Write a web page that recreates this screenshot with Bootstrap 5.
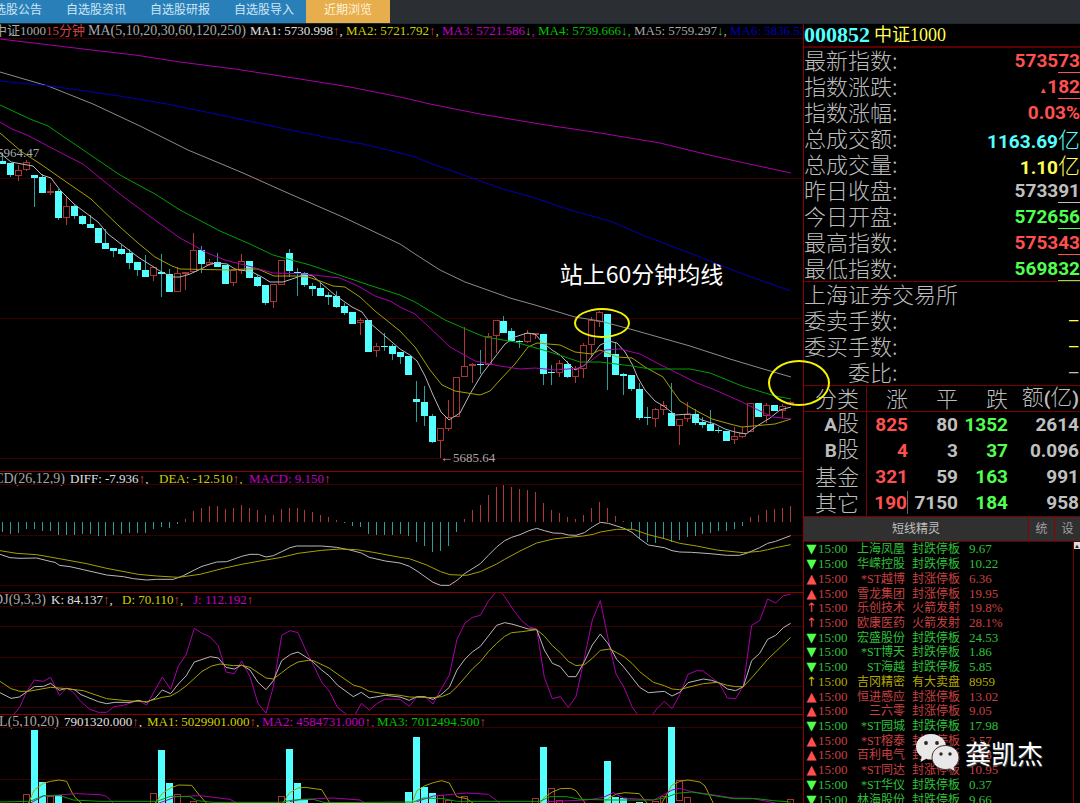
<!DOCTYPE html>
<html lang="zh-CN">
<head>
<meta charset="utf-8">
<meta name="viewport" content="width=device-width, initial-scale=1">
<title>中证1000 15分钟</title>
<link href="https://cdn.jsdelivr.net/npm/bootstrap@5.3.0/dist/css/bootstrap.min.css" rel="stylesheet">
<style>
:root{--up:#ff5050;--down:#50ff50;--cy:#54ffff;--ye:#ffff50;--gr:#c0c0c0;--rule:#780000}
body{background:#000;color:var(--gr);font-family:"Liberation Serif","Noto Sans CJK SC",serif;font-size:13px;line-height:14px}
.topnav{background:#2b2e33;height:24px;border-bottom:1px solid #1c2a35}
.topnav .nav-link{width:84px;height:23px;padding:0;font-size:12px;line-height:21px;text-align:center;white-space:nowrap;color:#cfe6f5;background:#2980b9;border-radius:0}
.topnav .nav-link.active{background:#e6ae4c;color:#fff2d8}
.topnav li:first-child{margin-left:-30px}
.charts{min-width:0;z-index:2}
.pane{overflow:hidden;border-top:1px solid #8c0000}
.pane:first-child{border-top:0}
.legend{display:grid;height:14px;white-space:nowrap;line-height:14px}
.legend .head{display:flex;justify-content:flex-end;padding-right:5px;color:#a8a8a8;min-width:0}
.legend .head,.legend .params{font-size:14px}
.legend i{font-style:normal}
.lg-price{grid-template-columns:46px 42px 162px repeat(5,96px) 73px;overflow:hidden}
.lg-price .head{padding-right:0;font-size:13px}
.lg-macd{grid-template-columns:70px 89px 90px auto}
.lg-kdj{grid-template-columns:51px 71px 71px auto}
.lg-vol{grid-template-columns:64px 83px 115px 115px auto}
.t-up{color:var(--up)}.t-dn{color:var(--down)}.t-cy{color:var(--cy)}.t-ye{color:var(--ye)}
.l-w{color:#e0e0e0}.l-y{color:#cfcf00}.l-m{color:#c000c0}.l-g{color:#00c000}.l-s{color:#a8a8a8}.l-b{color:#0000b8}.l-r{color:#d04040}
.a-u{color:#d04848}.a-d{color:#48b848}
.plot{position:relative}
.plot svg{display:block;width:100%;overflow:visible}
.p-price svg{height:433px}.p-macd svg{height:106px}.p-kdj svg{height:107px}.p-vol svg{height:74px}
.plot line,.plot polyline,.plot rect{vector-effect:non-scaling-stroke;fill:none;stroke-width:1}
.plot .grid{stroke:#380000;shape-rendering:crispEdges}
.plot .dn{fill:#54ffff;stroke:none;shape-rendering:crispEdges}
.plot .up{fill:#000;stroke:#a83434;shape-rendering:crispEdges}
.plot .wd{stroke:#2c9c9c;shape-rendering:crispEdges}
.plot .wu{stroke:#b03838;shape-rendering:crispEdges}
.s-w{stroke:#b8b8b8}.s-s{stroke:#8c8c8c}.s-y{stroke:#a8a000}.s-m{stroke:#a800a8}.s-g{stroke:#00a000}.s-b{stroke:#0000b4}
.tip{position:absolute;white-space:nowrap;color:#a8a8a8}
.tip-high{left:-3px;top:108px}
.tip-low{left:54.8%;top:413px}
.note{left:69.7%;top:220px;font:23px/30px "Noto Sans CJK SC",sans-serif;color:#fff}
.ring{position:absolute;border:2px solid #f4f400;border-radius:50%}
.ring-a{left:71.5%;top:270px;width:56px;height:30px}
.ring-b{right:-27px;top:336px;width:62px;height:46px}
.side{flex:0 0 277px;border-left:1px solid #8c0000;overflow:hidden}
.code{height:24px;border-bottom:2px solid #5c0000;line-height:24px;gap:4px}
.code strong{font-size:22px}
.code span{font-size:18px}
.quote{box-shadow:inset 0 -1px var(--rule);margin:0}
.quote>div{height:26px;line-height:22px}
.quote dt,.board th{font-family:"Noto Sans CJK SC",sans-serif;font-weight:300;font-size:22px;white-space:nowrap;color:#bcbcbc}
.quote dt.inset{padding-left:44px}
.quote dd,.board td{margin:0;font:700 19px/26px Roboto,"Liberation Sans",sans-serif;white-space:nowrap}
.quote dd em{font-style:normal;border-bottom:1px solid}
.quote dd span{font:300 22px/24px "Noto Sans CJK SC",sans-serif}
.quote dd small{font-size:8px}
.board{width:276px;table-layout:fixed;border-collapse:separate;border-spacing:0;text-align:right}
.board th,.board td{padding:0 1px 0 0;height:26px;line-height:20px;vertical-align:middle}
.board th{padding-bottom:4px;line-height:14px}
.board thead th{height:26px;border-bottom:1px solid var(--rule)}
.board th:first-child{border-right:1px solid var(--rule);padding-right:7px}
.board abbr{font:700 19px/14px Roboto,sans-serif;text-decoration:none}
.board .tick{border-right:1px solid #666}
.feedbar{height:26px;background:#303030;border-top:1px solid var(--rule);border-bottom:1px solid #600000;font-size:12px}
.feedbar button{width:26px;border:0;border-left:1px solid #8c0000;background:none;color:#a0a0a0;padding:0}
.feed{display:grid;grid-template-rows:repeat(18,1fr);height:265px;margin:0;padding:0;list-style:none;border-right:1px solid var(--rule);flex:1;font-size:13px;white-space:nowrap}
.feed li{display:grid;grid-template-columns:13px 31px 56px 7px 57px auto;align-items:center;padding-left:1px;color:#c84040}
.feed span{font-size:12px;text-align:right}
.feed .msg{grid-column:5;text-align:left}
.feed .d{color:#2fc03a}.feed .y{color:#b4a800}
.feed b{text-align:center;font:13px/12px "DejaVu Sans",sans-serif;color:var(--up)}
.feed .d b{color:var(--down)}.feed .y b{color:#c8bc00}
.sbar{width:6px;flex:none}
.sbar button{display:block;width:6px;height:7px;border:0;padding:0;background:#ddd;color:#222;font-size:6px;line-height:6px;overflow:hidden}
.wmark{position:absolute;right:37px;bottom:31px;gap:5px;font:26px/36px "Noto Sans CJK SC",sans-serif;color:#fff;text-shadow:1px 1px 1px #555;z-index:3}
</style>
</head>
<body>
<div class="vh-100 d-flex flex-column overflow-hidden position-relative">
<nav class="topnav flex-shrink-0 overflow-hidden" aria-label="自选股">
<ul class="nav flex-nowrap">
<li class="nav-item"><a class="nav-link" href="#">自选股公告</a></li>
<li class="nav-item"><a class="nav-link" href="#">自选股资讯</a></li>
<li class="nav-item"><a class="nav-link" href="#">自选股研报</a></li>
<li class="nav-item"><a class="nav-link" href="#">自选股导入</a></li>
<li class="nav-item"><a class="nav-link active" href="#" aria-current="page">近期浏览</a></li>
</ul>
</nav>
<div class="d-flex flex-fill">
<main class="charts flex-fill position-relative">
<section class="pane">
<div class="legend lg-price"><div class="head">中证1000</div><div class="l-r">15分钟</div><div class="l-s params">MA(5,10,20,30,60,120,250)</div>
<div class="l-w">MA1: 5730.998<i class="a-u">↑</i>,</div><div class="l-y">MA2: 5721.792<i class="a-u">↑</i>,</div><div class="l-m">MA3: 5721.586<i class="a-d">↓</i>,</div><div class="l-g">MA4: 5739.666<i class="a-d">↓</i>,</div><div class="l-s">MA5: 5759.297<i class="a-d">↓</i>,</div><div class="l-b overflow-hidden">MA6: 5836.53</div></div>
<div class="plot p-price"><svg id="price" viewBox="0 38 803 433" preserveAspectRatio="none"></svg>
<span class="tip tip-high">5964.47</span><span class="tip tip-low">←5685.64</span><span class="tip note">站上60分钟均线</span><div class="ring ring-a"></div></div>
</section>
<section class="pane">
<div class="legend lg-macd"><div class="head">MACD(26,12,9)</div><div class="l-w">DIFF: -7.936<i class="a-u">↑</i>,</div><div class="l-y">DEA: -12.510<i class="a-u">↑</i>,</div><div class="l-m">MACD: 9.150<i class="a-u">↑</i></div></div>
<div class="plot p-macd"><svg id="macd" viewBox="0 63 2409 318" preserveAspectRatio="none"></svg></div>
</section>
<section class="pane">
<div class="legend lg-kdj"><div class="head">KDJ(9,3,3)</div><div class="l-w">K: 84.137<i class="a-u">↑</i>,</div><div class="l-y">D: 70.110<i class="a-u">↑</i>,</div><div class="l-m">J: 112.192<i class="a-u">↑</i></div></div>
<div class="plot p-kdj"><svg id="kdj" viewBox="0 51 2409 321" preserveAspectRatio="none"></svg></div>
</section>
<section class="pane">
<div class="legend lg-vol"><div class="head">VOL(5,10,20)</div><div class="l-w">7901320.000<i class="a-u">↑</i>,</div><div class="l-y">MA1: 5029901.000<i class="a-u">↑</i>,</div><div class="l-m">MA2: 4584731.000<i class="a-u">↑</i>,</div><div class="l-g">MA3: 7012494.500<i class="a-u">↑</i></div></div>
<div class="plot p-vol"><svg id="vol" viewBox="0 417 2409 222" preserveAspectRatio="none"></svg></div>
</section>
<div class="ring ring-b"></div>
</main>
<aside class="side">
<div class="code d-flex align-items-center"><strong class="t-cy">000852</strong><span class="t-ye">中证1000</span></div>
<dl class="quote">
<div class="d-flex justify-content-between"><dt>最新指数:</dt><dd class="t-up">5735<em>73</em></dd></div>
<div class="d-flex justify-content-between"><dt>指数涨跌:</dt><dd class="t-up"><small>▲</small>1<em>82</em></dd></div>
<div class="d-flex justify-content-between"><dt>指数涨幅:</dt><dd class="t-up">0.03%</dd></div>
<div class="d-flex justify-content-between"><dt>总成交额:</dt><dd class="t-cy">1163.69<span>亿</span></dd></div>
<div class="d-flex justify-content-between"><dt>总成交量:</dt><dd class="t-ye">1.10<span>亿</span></dd></div>
<div class="d-flex justify-content-between"><dt>昨日收盘:</dt><dd>5733<em>91</em></dd></div>
<div class="d-flex justify-content-between"><dt>今日开盘:</dt><dd class="t-dn">5726<em>56</em></dd></div>
<div class="d-flex justify-content-between"><dt>最高指数:</dt><dd class="t-up">5753<em>43</em></dd></div>
<div class="d-flex justify-content-between"><dt>最低指数:</dt><dd class="t-dn">5698<em>32</em></dd></div>
</dl>
<dl class="quote">
<div class="d-flex justify-content-between"><dt>上海证券交易所</dt></div>
<div class="d-flex justify-content-between"><dt>委卖手数:</dt><dd class="t-ye fw-normal">–</dd></div>
<div class="d-flex justify-content-between"><dt>委买手数:</dt><dd class="t-ye fw-normal">–</dd></div>
<div class="d-flex justify-content-between"><dt class="inset">委比:</dt><dd class="fw-normal">–</dd></div>
</dl>
<table class="board">
<colgroup><col style="width:63px"><col style="width:42px"><col style="width:50px"><col style="width:50px"><col></colgroup>
<thead><tr><th>分类</th><th>涨</th><th>平</th><th>跌</th><th>额<abbr>(</abbr>亿<abbr>)</abbr></th></tr></thead>
<tbody>
<tr><th><abbr>A</abbr>股</th><td class="t-up">825</td><td>80</td><td class="t-dn">1352</td><td>2614</td></tr>
<tr><th><abbr>B</abbr>股</th><td class="t-up">4</td><td>3</td><td class="t-dn">37</td><td>0.096</td></tr>
<tr><th>基金</th><td class="t-up">321</td><td>59</td><td class="t-dn">163</td><td>991</td></tr>
<tr><th>其它</th><td class="t-up"><span class="tick">190</span></td><td>7150</td><td class="t-dn">184</td><td>958</td></tr>
</tbody>
</table>
<div class="feedbar d-flex align-items-stretch"><div class="flex-fill text-center align-self-center">短线精灵</div><button type="button">统</button><button type="button">设</button></div>
<div class="d-flex"><ul class="feed" id="feed"></ul><div class="sbar"><button type="button" aria-label="上">▲</button></div></div>
</aside>
</div>
<div class="wmark d-flex align-items-center">
<svg width="44" height="38" viewBox="0 0 44 38" aria-hidden="true"><g fill="#e8e8e8"><path d="M15 0C6.700 0 0 5.600 0 12.700c0 4.100 2.200 7.700 5.700 10L4.500 28l5.600-3.200c1.600.4 3.200.6 4.900.6 8.300 0 15-5.600 15-12.700S23.300 0 15 0z"/><path d="M29.500 11.500C21.800 11.500 16 16.700 16 23.500s5.800 12 13.500 12c1.500 0 3-.2 4.400-.6l5.600 2.900-1.500-4.600c3.200-2.200 5-5.700 5-9.700 0-6.800-5.800-12-13.500-12z" stroke="#433" stroke-width="1"/></g><g fill="#322"><circle cx="10" cy="9" r="1.900"/><circle cx="21" cy="9" r="1.900"/><circle cx="25" cy="20" r="1.700"/><circle cx="34" cy="20" r="1.700"/></g></svg>
<span>龚凯杰</span></div>
</div>
<script src="https://cdn.jsdelivr.net/npm/bootstrap@5.3.0/dist/js/bootstrap.bundle.min.js"></script>
<script>
const grid=(w,ys)=>ys.map(y=>`<line class="grid" x1="0" x2="${w}" y1="${y}" y2="${y}"/>`).join('');
const path=(cls,pts)=>`<polyline class="s-${cls}" points="${pts}"/>`;
const put=(id,html)=>document.getElementById(id).innerHTML=html;

// Candles: direction, body top, body bottom, high, low
const candles=`c161,164,153,164 c163,175,163,177 r170,176,165,181 r162,170,160,171 c175,178,175,207 c177,193,174,193 r191,193,183,195 c191,218,189,220 r206,218,197,225 c206,216,205,219 c216,224,215,225 c224,228,215,228 c228,243,228,243 c243,249,229,249 c248,251,248,257 c249,254,245,255 c253,263,249,269 c262,270,262,276 c270,277,255,277 r267,276,266,281 c272,274,254,297 c274,292,269,292 r273,292,267,292 r272,273,272,290 r250,272,233,273 c250,264,246,273 r262,265,259,266 c262,267,253,267 c265,284,265,284 r270,283,270,286 r261,271,254,274 c261,278,261,278 c277,286,275,287 c285,303,285,305 r284,302,284,308 r260,285,260,285 c253,271,249,277 c272,273,268,296 c273,285,272,287 c286,289,283,296 c288,296,283,296 c295,297,292,305 c296,307,291,308 c306,313,303,315 c312,324,312,324 r320,323,318,335 c320,352,320,352 r346,351,343,357 c346,347,333,351 c346,354,344,360 c352,357,352,364 c356,375,356,375 c399,402,381,422 c402,416,386,426 c416,442,414,443 r428,441,428,458 r417,429,400,431 r377,417,377,417 r366,377,327,377 r364,365,363,383 c364,365,350,374 r336,365,333,365 r320,336,320,353 c321,333,316,333 c331,341,328,341 c341,342,340,348 r333,342,330,343 r333,334,333,339 c334,374,334,385 c372,373,365,385 r363,373,360,377 c364,377,361,378 r368,377,366,383 r345,369,343,378 r320,345,317,357 r312,322,311,327 c314,357,314,390 c354,375,342,375 c374,376,373,395 c375,389,375,391 c389,418,383,420 c417,418,407,425 r409,419,408,427 r405,410,401,415 c413,426,383,426 r419,426,419,445 r414,419,402,422 c414,423,409,425 c422,425,417,428 c424,431,410,431 c430,431,427,433 c431,441,431,441 r436,440,427,444 r433,437,427,438 r403,432,403,432 c403,417,403,417 r405,416,403,423 c405,411,405,411 r406,411,404,418 r402,403,401,403`.split(' ');
let h=grid(803,[38,178.5,318.5,458.5]);
candles.forEach((c,i)=>{const up=c[0]==='r',[t,b,hi,lo]=c.slice(1).split(',').map(Number),x=Math.round(3+i*7.96)-.5;
h+=`<line class="${up?'wu':'wd'}" x1="${x}" x2="${x}" y1="${hi}" y2="${lo}"/>`;
h+=up?`<rect class="up" x="${x-3}" y="${t+.5}" width="6" height="${Math.max(b-t-1,.5)}"/>`:`<rect class="dn" x="${x-3.5}" y="${t}" width="7" height="${b-t}"/>`;});
h+=path('w','0,153 11,162 33,166 42,175 51,178 60,190 74,204 98,222 108,234 138,257 160,271 172,277 180,277 190,274 203,268 210,264 217,263 227,264 235,269 252,272 262,277 270,282 283,282 295,278 305,274 313,276 322,284 335,295 352,307 362,312 370,323 385,336 400,349 410,355 417,361 425,376 433,395 441,412 449,420 460,413 470,394 482,374 495,357 505,344 515,337 527,333 535,334 542,342 552,350 560,355 567,362 575,370 585,365 592,356 600,345 609,341 617,343 625,352 632,364 638,378 645,390 655,401 665,407 675,415 690,414 702,420 715,424 725,429 735,432 746,434 757,426 770,418 780,410 791,407')
+path('y','0,133 22,152 42,165 62,179 91,199 120,227 138,243 155,257 172,266 180,269 230,270 245,269 258,269 274,276 295,276 308,277 320,281 333,286 345,287 360,297 375,311 400,331 415,347 430,370 442,385 455,391 480,395 490,391 500,380 515,364 528,347 537,343 560,345 575,352 592,354 600,350 610,354 617,357 632,358 645,367 663,377 672,390 680,401 695,410 712,419 730,424 742,427 775,424 791,419')
+path('m','0,122 12,129 27,135 65,155 83,164 100,178 125,198 155,220 180,238 195,246 205,252 225,260 252,267 273,273 305,274 340,278 358,286 375,296 390,301 400,307 415,314 430,328 450,347 475,361 500,366 520,369 535,368 555,370 580,368 592,360 605,350 620,349 640,354 655,362 677,373 697,383 715,390 740,401 760,411 773,417 791,419')
+path('g','0,105 30,119 48,126 70,141 95,158 120,175 155,194 180,210 220,231 250,244 273,255 310,265 345,277 375,287 400,295 415,302 445,320 475,333 485,337 515,342 550,352 580,362 600,362 632,366 650,369 690,369 710,373 742,386 775,396 791,399')
+path('s','0,72 48,86 93,104 140,126 188,150 243,173 290,194 345,218 400,244 415,254 440,270 465,282 510,298 535,305 575,317 600,321 630,329 690,346 730,359 760,368 791,377')
+path('b','0,81 50,86 120,96 167,104 230,117 295,131 345,141 363,144 400,153 415,157 435,165 475,179 500,188 535,198 570,210 610,221 645,236 700,257 740,273 791,291')
+path('m','0,39 50,45 100,51 135,55 180,62 235,69 300,79 350,87 400,97 430,104 480,114 540,124 600,133 660,143 705,154 740,162 791,173');
put('price',h);

// The indicator panes use three units to the pixel
const X=i=>3*Math.round(3+i*7.96)-1.5;
const bars=[201,206,203,192,192,199,199,210,209,209,207,207,212,214,211,206,203,203,203,192,187,188,176,162,138,129,123,123,131,129,121,128,136,151,149,132,128,128,134,141,149,155,165,174,183,187,206,209,209,209,207,213,231,242,261,257,242,202,162,136,120,91,66,59,66,73,76,81,113,134,145,157,162,149,128,111,130,153,169,192,218,232,233,223,232,226,215,212,206,204,199,199,192,184,156,149,136,132,128,123];
put('macd',grid(2409,[58.5,211.5,361.5])+bars.map((v,i)=>`<line class="${v<173?'wu':'wd'}" x1="${X(i)}" x2="${X(i)}" y1="172" y2="${v}"/>`).join('')
+path('w','0,268 30,278 60,280 110,279 150,289 165,292 178,301 210,305 250,314 320,330 370,335 400,341 440,345 470,343 520,343 550,332 583,315 606,304 650,291 680,290 725,274 750,268 775,268 798,276 820,272 845,260 870,248 890,243 965,243 1010,247 1050,255 1084,264 1108,277 1156,288 1200,294 1228,304 1251,318 1299,352 1322,361 1348,361 1371,346 1395,325 1441,296 1465,271 1490,246 1514,227 1535,217 1560,209 1587,197 1610,190 1633,197 1660,204 1685,205 1705,210 1728,211 1753,203 1777,186 1801,172 1825,175 1872,190 1896,202 1920,222 1945,240 1993,248 2016,257 2039,261 2075,262 2130,266 2182,271 2218,271 2240,265 2279,248 2303,235 2327,229 2372,212')
+path('y','0,257 50,265 110,269 178,281 260,296 320,310 415,328 470,333 535,337 600,328 670,310 725,298 774,289 845,277 894,265 965,256 1020,252 1070,254 1120,262 1200,277 1228,281 1280,300 1322,320 1350,329 1400,331 1441,320 1490,297 1514,283 1560,258 1610,234 1660,222 1705,217 1750,213 1780,208 1801,201 1850,193 1900,193 1945,209 1993,221 2039,235 2090,243 2150,255 2230,263 2279,259 2303,254 2327,248 2372,239'));
put('kdj',grid(2409,[49.5,109.5,202.5,290.5,352.5])
+path('m','40,375 60,350 80,305 103,270 130,274 152,262 178,316 200,294 220,307 243,335 268,357 295,367 320,367 342,350 370,346 415,331 440,345 487,261 512,298 535,228 558,195 583,115 606,130 631,141 655,168 678,246 703,251 725,213 750,260 774,340 798,370 820,290 845,136 870,122 894,128 917,180 940,225 965,276 990,307 1012,352 1038,372 1050,385 1065,375 1084,340 1108,360 1132,340 1156,327 1200,328 1228,349 1251,320 1274,320 1299,342 1322,300 1348,255 1371,148 1395,99 1418,82 1441,76 1465,34 1490,3 1500,3 1514,20 1539,58 1565,92 1587,110 1610,118 1633,262 1657,326 1681,320 1705,352 1728,320 1753,205 1777,90 1801,32 1825,150 1848,252 1872,292 1896,350 1912,373 1930,385 1958,373 1970,357 1993,334 2016,356 2039,315 2064,253 2090,242 2110,243 2135,263 2158,280 2182,324 2207,326 2230,288 2255,106 2279,92 2303,27 2327,39 2350,17 2372,13')
+path('w','0,308 33,325 58,321 103,290 130,289 152,280 178,301 200,295 225,300 243,314 295,335 320,341 345,337 390,337 415,331 440,337 465,325 487,300 512,311 535,282 558,258 583,216 631,200 655,204 678,232 703,237 725,225 750,240 774,277 798,299 820,272 845,212 872,193 894,186 935,212 965,240 987,257 1012,285 1060,320 1084,307 1108,324 1156,316 1200,321 1228,331 1251,320 1274,320 1299,328 1322,315 1348,292 1371,240 1395,207 1418,185 1441,169 1490,106 1514,98 1539,103 1585,117 1610,118 1633,180 1657,220 1681,230 1705,260 1728,260 1753,215 1777,165 1801,132 1825,162 1850,208 1872,232 1919,292 1945,308 1993,304 2016,318 2039,307 2064,278 2110,267 2135,271 2158,279 2182,297 2207,302 2230,290 2255,212 2279,190 2303,148 2327,136 2350,113 2372,100')
+path('y','0,274 33,296 60,304 85,304 152,292 200,296 250,302 320,326 390,333 440,335 487,322 512,318 535,305 558,288 606,244 635,228 660,222 700,227 725,226 750,232 798,264 820,267 845,248 870,229 894,216 925,211 940,212 987,234 1012,252 1060,285 1084,292 1108,304 1156,312 1200,316 1228,321 1299,323 1325,320 1350,310 1371,290 1418,236 1441,215 1465,185 1490,160 1514,139 1535,128 1565,125 1610,119 1633,138 1657,167 1681,188 1705,214 1728,227 1753,224 1777,205 1801,181 1830,177 1850,188 1872,200 1896,220 1919,245 1960,277 1993,287 2016,297 2039,299 2064,292 2110,281 2150,277 2182,286 2207,290 2230,290 2260,258 2303,208 2372,142'));
const vols='3r614 4c421 5c576 6r619 7c616 19r611 20c481 21c578 22r614 24r633 35r619 36c477 37c578 38c627 51c606 52c441 53c591 54c608 55r617 56r632 58r619 67r626 68c471 69r595 70r631 76c513 77c621 78c625 80c635 82r635 83r619 84c412 85r570 86r622 99r629'.split(' ');
put('vol',grid(2409,[412.5,567.5])+vols.map(s=>{const[,i,k,t]=s.match(/(\d+)([rc])(\d+)/),x=X(+i);
return k==='r'?`<rect class="up" x="${x-9}" y="${t}" width="18" height="60"/>`:`<rect class="dn" x="${x-10.5}" y="${t}" width="21" height="${660-t}"/>`;}).join('')
+['85,640 103,600 130,580 152,574 178,570 200,574 215,606 225,622 245,640','465,640 487,610 512,594 535,585 575,586 600,618 620,640','848,640 869,608 894,594 915,592 965,599 990,640','1235,640 1251,602 1275,587 1300,578 1325,572 1348,579 1370,620 1400,626 1420,640','1620,640 1633,622 1657,606 1681,596 1712,595 1728,602 1756,640','1810,640 1825,625 1850,612 1875,608 1918,611 1942,640','1985,640 2016,585 2039,574 2064,570 2100,576 2115,588 2140,640'].map(p=>path('y',p)).join('')
+['90,640 130,618 230,611 300,614 320,619 340,640','475,640 530,620 600,617 690,628 712,640','870,635 900,628 1000,624 1080,630 1095,640','1250,635 1300,618 1400,609 1465,613 1500,640','1640,635 1760,630 1810,622 1840,608 1870,624 1960,630 1990,615 2016,600 2039,595 2075,605 2130,613 2200,624 2255,625 2330,640'].map(p=>path('m',p)).join('')
+path('g','0,636 90,634 130,617 180,617 220,630 300,634 470,634 512,619 570,620 590,632 640,637 840,637 880,630 940,628 975,638 1240,636 1270,624 1330,626 1370,634 1620,634 1650,620 1700,620 1740,628 1840,630 1960,630 2000,622 2030,610 2075,606 2130,615 2200,626 2270,626 2320,632 2372,636'));

const D='封跌停板',U='封涨停板',F='火箭发射';
const feed=[['▼','上海凤凰',D,'9.67'],['▼','华嵘控股',D,'10.22'],['▲','*ST越博',U,'6.36'],['▲','雪龙集团',U,'19.95'],['↑','乐创技术',F,'19.8%'],['↑','欧康医药',F,'28.1%'],['▼','宏盛股份',D,'24.53'],['▼','*ST博天',D,'1.86'],['▼','ST海越',D,'5.85'],['↑','吉冈精密','有大卖盘','8959','y'],['▲','恒进感应',U,'13.02'],['▲','三六零',U,'9.05'],['▼','*ST园城',D,'17.98'],['▲','*ST榕泰',U,'3.57'],['▲','百利电气',U,'4.68'],['▲','*ST同达',U,'10.95'],['▼','*ST华仪',D,'0.37'],['▼','林海股份',D,'9.66']];
put('feed',feed.map(([s,n,m,v,c])=>`<li class="${c||(s==='▼'?'d':'u')}"><b>${s}</b><time>15:00</time><span>${n}</span><span class="msg">${m}</span><data>${v}</data></li>`).join(''));
</script>
</body>
</html>
